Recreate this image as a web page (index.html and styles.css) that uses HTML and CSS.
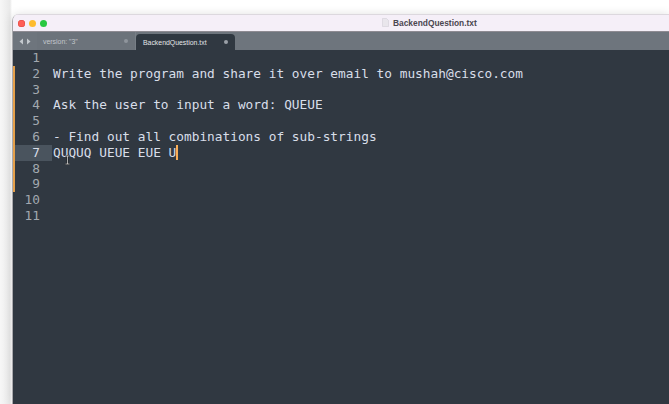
FILE: index.html
```html
<!DOCTYPE html>
<html>
<head>
<meta charset="utf-8">
<link rel="stylesheet" href="styles.css">
</head>
<body>
<div class="window">
  <div class="titlebar">
    <div class="lights">
      <span class="light red"></span>
      <span class="light yellow"></span>
      <span class="light green"></span>
    </div>
    <div class="title">
      <svg class="docicon" width="7" height="9" viewBox="0 0 7 9"><path d="M0.5 0.5 H4.5 L6.5 2.5 V8.5 H0.5 Z" fill="#e9e6ec" stroke="#d2ced6" stroke-width="0.6"/></svg>
      <span>BackendQuestion.txt</span>
    </div>
  </div>
  <div class="tabbar">
    <div class="navs">
      <svg width="12" height="7" viewBox="0 0 12 7"><path d="M4 0.5 L0.5 3.5 L4 6.5 Z" fill="#c4c9ce"/><path d="M8 0.5 L11.5 3.5 L8 6.5 Z" fill="#c4c9ce"/></svg>
    </div>
    <div class="tab inactive">
      <span class="tabname">version: "3"</span>
      <span class="dot"></span>
    </div>
    <div class="tab active">
      <span class="tabname">BackendQuestion.txt</span>
      <span class="dot"></span>
    </div>
  </div>
  <div class="editor">
    <div class="gutter">
      <div class="ln">1</div>
      <div class="ln mod">2</div>
      <div class="ln mod">3</div>
      <div class="ln mod">4</div>
      <div class="ln mod">5</div>
      <div class="ln mod">6</div>
      <div class="ln mod cur">7</div>
      <div class="ln mod">8</div>
      <div class="ln mod">9</div>
      <div class="ln">10</div>
      <div class="ln">11</div>
    </div>
    <div class="code">
      <div class="line"></div>
      <div class="line">Write the program and share it over email to mushah@cisco.com</div>
      <div class="line"></div>
      <div class="line">Ask the user to input a word: QUEUE</div>
      <div class="line"></div>
      <div class="line">- Find out all combinations of sub-strings</div>
      <div class="line">QUQUQ UEUE EUE U<span class="caret"></span></div>
      <div class="line"></div>
      <div class="line"></div>
      <div class="line"></div>
      <div class="line"></div>
    </div>
    <svg class="ibeam" width="7" height="10" viewBox="0 0 7 10"><path d="M1.5 1 H5.5 M3.5 1 V9 M1.5 9 H5.5" stroke="#111" stroke-width="1.6" fill="none"/><path d="M1.5 1 H5.5 M3.5 1 V9 M1.5 9 H5.5" stroke="#eee" stroke-width="0.7" fill="none"/></svg>
  </div>
</div>
</body>
</html>
```
FILE: styles.css
```css
html, body {
  margin: 0;
  padding: 0;
  height: 100%;
  overflow: hidden;
}
body {
  background: linear-gradient(to right, #f7f7f7 0px, #e9e9e9 10px, #ffffff 12px);
  font-family: "Liberation Sans", Arial, sans-serif;
}
.window {
  margin: 14px 0 0 12px;
  height: 390px;
  display: flex;
  flex-direction: column;
  border-top-left-radius: 7px;
  overflow: hidden;
  border-left: 1px solid #a9a9ad;
  box-shadow: 0 0 10px rgba(0,0,0,0.12);
}
.titlebar {
  flex-shrink: 0;
  height: 18px;
  box-sizing: border-box;
  background: #f5eff8;
  border-bottom: 1px solid #8e8b92;
  border-top: 1px solid #dcd8de;
  display: flex;
  align-items: center;
}
.lights {
  display: flex;
  gap: 4px;
  padding-left: 5px;
}
.light {
  width: 7px;
  height: 7px;
  border-radius: 50%;
  display: block;
}
.red { background: #fe5f57; box-shadow: inset 0 0 0 0.5px #e0443e; }
.yellow { background: #febc2e; }
.green { background: #28c840; }
.title {
  margin-left: 335px;
  display: flex;
  align-items: center;
  gap: 4px;
  font-size: 8.4px;
  font-weight: bold;
  color: #4b4750;
}
.docicon { display: block; margin-top: -1px; }
.tabbar {
  flex-shrink: 0;
  height: 18px;
  background: #6e757d;
  display: flex;
  align-items: stretch;
}
.navs {
  width: 24px;
  box-sizing: border-box;
  display: flex;
  align-items: center;
  padding-left: 6px;
}
.navs svg { display: block; }
.tab {
  display: flex;
  align-items: center;
  font-size: 6.9px;
  box-sizing: border-box;
}
.tab.inactive {
  width: 99px;
  padding-left: 6px;
  color: #c3c7cc;
  background: #6c737b;
  border-right: 1px solid #777e86;
}
.tab.active {
  width: 99px;
  margin-top: 2px;
  padding-left: 7px;
  background: #303841;
  color: #e3e5e8;
  border-top-left-radius: 4px;
  border-top-right-radius: 4px;
}
.tabname { flex: 1; }
.dot {
  width: 4px;
  height: 4px;
  border-radius: 50%;
  background: #8f959c;
  margin-right: 7px;
}
.tab.active .dot { background: #9aa0a7; }
.editor {
  flex: 1;
  min-height: 0;
  overflow: hidden;
  background: #303841;
  display: flex;
  align-items: flex-start;
  position: relative;
  font-family: "DejaVu Sans Mono", monospace;
  font-size: 12.8px;
  line-height: 15.8px;
}
.gutter {
  width: 39px;
  flex-shrink: 0;
  text-align: right;
  color: #a2a8af;
}
.ln {
  height: 15.8px;
  padding-right: 12px;
}
.ln.mod {
  box-shadow: inset 2px 0 0 #e5a04a;
}
.ln.cur {
  background: #4a545e;
  color: #d8dee9;
}
.code {
  padding-left: 1px;
  color: #d8dee9;
}
.line {
  height: 15.8px;
  white-space: pre;
}
.caret {
  display: inline-block;
  width: 1.5px;
  height: 15px;
  background: #f9ae58;
  vertical-align: -3px;
}
.ibeam {
  position: absolute;
  left: 51px;
  top: 105px;
}
```
